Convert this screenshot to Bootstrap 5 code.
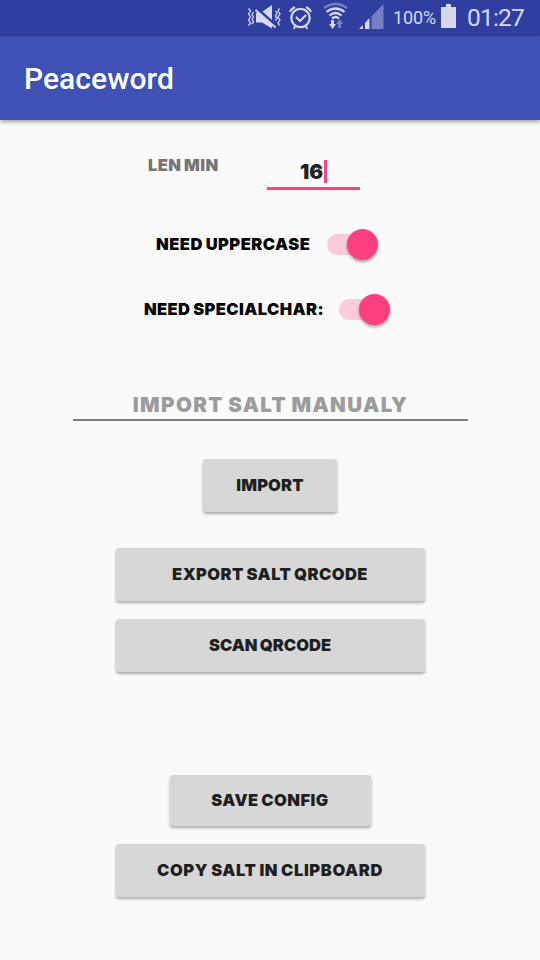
<!DOCTYPE html>
<html lang="en">
<head>
<meta charset="utf-8">
<meta name="viewport" content="width=device-width, initial-scale=1">
<title>Peaceword</title>
<link href="https://cdn.jsdelivr.net/npm/bootstrap@5.3.0/dist/css/bootstrap.min.css" rel="stylesheet">
<style>
body{background:#fafafa;font-family:Roboto,sans-serif;width:540px;height:960px;overflow:hidden}
.statusbar{height:36px;background:#303f9f;color:#d6d9ec}
.statusbar svg{display:block;flex:none}
.pct{font-size:18px;line-height:36px;letter-spacing:-.1px;width:43px;margin-left:9px;white-space:nowrap}
.clock{font-size:24.5px;line-height:36px;margin-left:10px;white-space:nowrap;letter-spacing:-.8px}
.appbar{height:84px;background:#3f51b5;padding:0 24px;box-shadow:0 2px 4px rgba(0,0,0,.35)}
.appbar h1{font-size:30px;font-weight:500;line-height:86px;letter-spacing:.05px}
.chunky{font-family:Inter,sans-serif;font-weight:900;font-size:16.5px;line-height:20px;white-space:nowrap;color:#000;text-transform:uppercase;word-spacing:-1px}
.lenrow{height:75px;padding:35px 0 0 148px}
.lenlabel{color:#757575;width:119px;letter-spacing:.4px}
.lenfield{width:93px;height:35px;border-bottom:3px solid #ff4081;padding:5px 0 0 33px}
.lenfield .chunky{font-size:20.5px;line-height:24px;color:#212121;width:24px;letter-spacing:0}
.caret{width:3px;height:23px;background:#ff4081}
.switchrow{height:65px}
.first-switch{margin-top:17px;padding-left:156px}
.second-switch{padding-left:144px}
.switchrow .chunky{line-height:19px;padding-bottom:1px}
.toggle{width:52px;height:31px}
.toggle .track{fill:#fbcbdb}
.toggle .thumb{fill:#fc3f80;filter:drop-shadow(0 2px 1.5px rgba(0,0,0,.35))}
.saltfield{width:395px;height:40px;margin:39px auto 38px;margin-left:73px;border-bottom:2px solid #7c7c7c}
.saltfield .chunky{font-size:20.5px;line-height:26px;color:#9c9c9c;padding-top:11px;letter-spacing:1.38px}
.rawbtn{--bs-btn-border-width:0;--bs-btn-padding-y:0;--bs-btn-padding-x:0;--bs-btn-border-radius:3px;--bs-btn-bg:#d7d7d7;--bs-btn-hover-bg:#cfcfcf;height:53px;width:309px;box-shadow:0 2px 3px rgba(0,0,0,.32)}
.rawbtn .chunky{color:#1f1f1f}
.w-import{width:134px}.w-save{width:201px;height:51px}
.sp-upper{width:171px;letter-spacing:.5px}
.sp-special{width:195px;letter-spacing:.4px}
.sp-import{letter-spacing:.15px}
.sp-export,.sp-save{letter-spacing:.45px}
.sp-copy{letter-spacing:.62px}
.mt-export{margin-top:36px}.mt-scan{margin-top:18px}.mt-save{margin-top:103px}
</style>
<script src="https://cdn.jsdelivr.net/npm/bootstrap@5.3.0/dist/js/bootstrap.bundle.min.js"></script>
</head>
<body>
<header>
 <div class="statusbar d-flex">
  <svg width="384" height="36" viewBox="0 0 384 36" fill="none" stroke="#d6d9ec" aria-hidden="true">
   <path d="M248.500 8.500l2 2.500-2 3 2 3-2 3 2 3-2 2.500M253.500 12l-1.500 2.500 1.500 2.500-1.500 2.500 1.500 2.500-1.500 2M275.500 11l1.500 2.500-1.500 2.500 1.500 2.500-1.500 2M279.500 8.500l-1.500 2.500 2 3-2 3 2 3-2 3 1.500 2.500" stroke-width="1.300"/>
   <path d="M262.500 11.500l9.500-6.500v15zM256 13h3.500l12.500 10.500v5l-10-6h-6z" fill="#d6d9ec" stroke="none"/>
   <path d="M255.500 10l20 17.500" stroke-width="2"/>
   <circle cx="300.500" cy="18" r="9.200" stroke-width="2.200"/>
   <path d="M296 17l4 4 6-6M290 12q1-3 5-5M306 7q4 2 5 5M295 26l-1 3M306 26l1 3" stroke-width="2"/>
   <path d="M324 8q11.500-8 23 0" stroke="#7580c0" stroke-width="2.500"/>
   <path d="M326.500 12q9-7 18 0M329.500 15.500q6-5 12 0M332 18.500q3.500-3 7 0" stroke-width="2.200"/>
   <path d="M331 20h3v4h2l-3.500 5-3.500-5h2z" fill="#d6d9ec" stroke="none"/>
   <path d="M338 28v-4h-2l3.500-5 3.500 5h-2v4z" fill="#7580c0" stroke="none"/>
   <path d="M371.500 29V16.500L383.500 4v25z" fill="#7580c0" stroke="none"/>
   <path d="M359 29l4-4v4zM365 29v-6l4.500-5v11z" fill="#d6d9ec" stroke="none"/>
  </svg>
  <span class="pct">100%</span>
  <svg class="ms-1" width="17" height="36" viewBox="0 0 17 36" aria-hidden="true"><path d="M1 7h5V4h5v3h5v21H1z" fill="#d6d9ec"/></svg>
  <span class="clock">01:27</span>
 </div>
 <div class="appbar"><h1 class="m-0 text-white">Peaceword</h1></div>
</header>
<main>
 <div class="lenrow d-flex">
  <label class="chunky lenlabel">Len min</label>
  <div class="lenfield d-flex"><span class="chunky">16</span><span class="caret"></span></div>
 </div>
 <div class="switchrow first-switch d-flex align-items-center">
  <span class="chunky sp-upper">Need uppercase</span>
  <svg class="toggle overflow-visible" viewBox="0 0 52 31"><rect class="track" y="5" width="46" height="21" rx="10.500"/><circle class="thumb" cx="35.500" cy="15.500" r="15.500"/></svg>
 </div>
 <div class="switchrow second-switch d-flex align-items-center">
  <span class="chunky sp-special">Need specialchar:</span>
  <svg class="toggle overflow-visible" viewBox="0 0 52 31"><rect class="track" y="5" width="46" height="21" rx="10.500"/><circle class="thumb" cx="35.500" cy="15.500" r="15.500"/></svg>
 </div>
 <div class="saltfield text-center"><div class="chunky sp-salt">Import salt manualy</div></div>
 <div class="d-flex flex-column align-items-center">
  <button class="btn rawbtn w-import"><span class="chunky sp-import">Import</span></button>
  <button class="btn rawbtn mt-export"><span class="chunky sp-export">Export salt QRcode</span></button>
  <button class="btn rawbtn mt-scan"><span class="chunky sp-scan">Scan QRcode</span></button>
  <button class="btn rawbtn w-save mt-save"><span class="chunky sp-save">Save config</span></button>
  <button class="btn rawbtn mt-scan"><span class="chunky sp-copy">Copy salt in clipboard</span></button>
 </div>
</main>
</body>
</html>
